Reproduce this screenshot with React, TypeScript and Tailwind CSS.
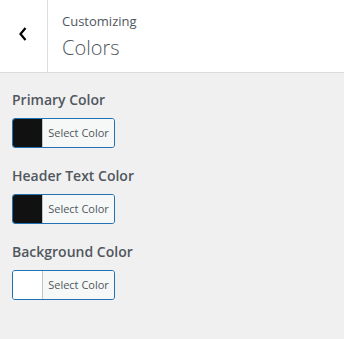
import React from "react";

const font = { fontFamily: '"Segoe UI", "Open Sans", "Noto Sans", sans-serif' };

function ColorControl({ label, color }: { label: string; color: string }) {
  return (
    <div className="flex flex-col">
      <div className="h-[24px] text-[14px] font-semibold leading-[24px] text-[#50575e]">{label}</div>
      <div className="mt-[6px] flex h-[30px] w-[103px] overflow-hidden rounded-[3px] border border-[#2271b1]">
        <div className="w-[30px] border-r border-[#c3c4c7]" style={{ backgroundColor: color }} />
        <div className="flex flex-1 items-center justify-center bg-[#f6f7f7] text-[11px] text-[#50575e]">Select Color</div>
      </div>
    </div>
  );
}

export default function App() {
  return (
    <div className="flex h-[339px] w-[344px] flex-col bg-[#f0f0f0]" style={font}>
      <div className="flex h-[73px] border-b border-[#dcdcde] bg-white">
        <div className="flex w-[48px] items-center justify-center border-r border-[#dcdcde]">
          <svg width="10" height="16" viewBox="0 0 10 16" className="-mt-[4px] ml-[-1px]">
            <path d="M7.5 2 L2.5 8 L7.5 14" fill="none" stroke="#000" strokeWidth="2.2" />
          </svg>
        </div>
        <div className="flex flex-col pl-[14px] pt-[11px]">
          <div className="text-[13px] leading-[20px] text-[#50575e]">Customizing</div>
          <div className="mt-[4px] text-[20px] font-light leading-[26px] text-[#50575e]">Colors</div>
        </div>
      </div>
      <div className="flex flex-col gap-[16px] px-[12px] pt-[15px]">
        <ColorControl label="Primary Color" color="#111111" />
        <ColorControl label="Header Text Color" color="#111111" />
        <ColorControl label="Background Color" color="#ffffff" />
      </div>
    </div>
  );
}
